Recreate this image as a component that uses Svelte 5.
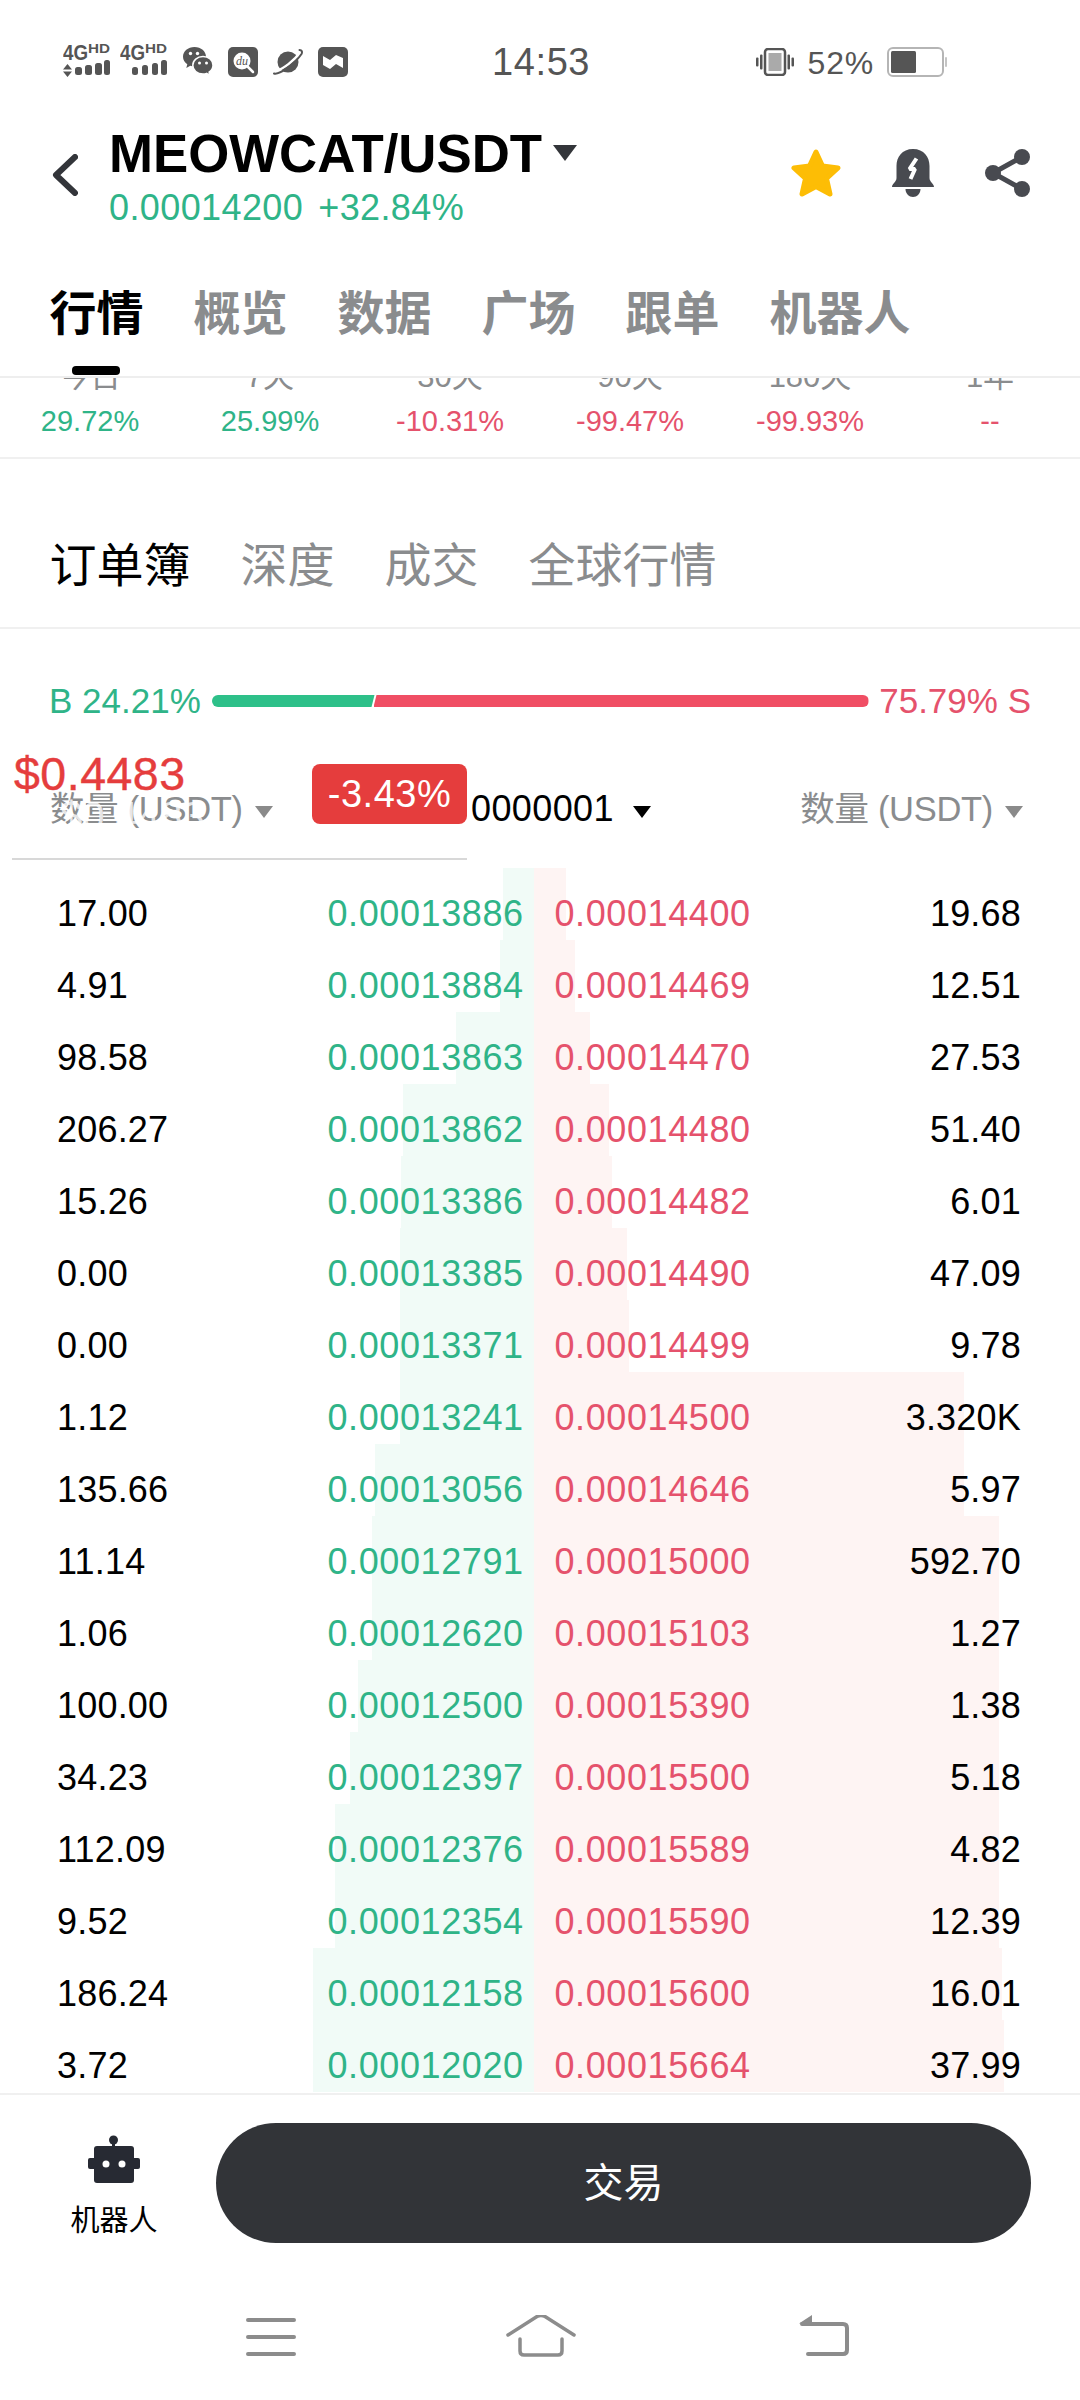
<script>
  const periods = [
    ['今日', '29.72%', 'up'], ['7天', '25.99%', 'up'], ['30天', '-10.31%', 'down'],
    ['90天', '-99.47%', 'down'], ['180天', '-99.93%', 'down'], ['1年', '--', 'down']
  ];
  const mainTabs = ['行情', '概览', '数据', '广场', '跟单', '机器人'];
  const bookTabs = ['订单簿', '深度', '成交', '全球行情'];
  const rows = [
    ['17.00', '0.00013886', '0.00014400', '19.68', 503, 566],
    ['4.91', '0.00013884', '0.00014469', '12.51', 500, 575],
    ['98.58', '0.00013863', '0.00014470', '27.53', 456, 590],
    ['206.27', '0.00013862', '0.00014480', '51.40', 403, 609],
    ['15.26', '0.00013386', '0.00014482', '6.01', 401, 612],
    ['0.00', '0.00013385', '0.00014490', '47.09', 400, 627],
    ['0.00', '0.00013371', '0.00014499', '9.78', 400, 629],
    ['1.12', '0.00013241', '0.00014500', '3.320K', 400, 964],
    ['135.66', '0.00013056', '0.00014646', '5.97', 375, 964],
    ['11.14', '0.00012791', '0.00015000', '592.70', 372, 999],
    ['1.06', '0.00012620', '0.00015103', '1.27', 372, 999],
    ['100.00', '0.00012500', '0.00015390', '1.38', 358, 999],
    ['34.23', '0.00012397', '0.00015500', '5.18', 350, 999],
    ['112.09', '0.00012376', '0.00015589', '4.82', 335, 999],
    ['9.52', '0.00012354', '0.00015590', '12.39', 335, 999],
    ['186.24', '0.00012158', '0.00015600', '16.01', 313, 1002],
    ['3.72', '0.00012020', '0.00015664', '37.99', 313, 1004]
  ];
  const MID = 534;
</script>

<div class="page">
  <div class="status">
    <div class="status-left">
      <svg class="net" width="47" height="34" viewBox="0 0 47 34">
        <text x="0" y="16" class="g4" textLength="25" lengthAdjust="spacingAndGlyphs">4G</text>
        <text x="25" y="9" class="hd" textLength="22" lengthAdjust="spacingAndGlyphs">HD</text>
        <path d="M4.500 20l4.500 5.500H0zM4.500 33L0 27.500h9z" fill="#555" />
        <rect x="12" y="23" width="7" height="8" rx="2.500" fill="#555" />
        <rect x="22" y="21" width="7" height="10" rx="2.500" fill="#555" />
        <rect x="32" y="19" width="7" height="12" rx="2.500" fill="#555" />
        <rect x="41" y="16" width="6" height="15" rx="2.500" fill="#555" />
      </svg>
      <svg class="net" width="47" height="34" viewBox="0 0 47 34">
        <text x="0" y="16" class="g4" textLength="25" lengthAdjust="spacingAndGlyphs">4G</text>
        <text x="25" y="9" class="hd" textLength="22" lengthAdjust="spacingAndGlyphs">HD</text>
        <rect x="12" y="23" width="6" height="8" rx="2.500" fill="#555" />
        <rect x="22" y="21" width="6" height="10" rx="2.500" fill="#555" />
        <rect x="32" y="19" width="6" height="12" rx="2.500" fill="#555" />
        <rect x="41" y="16" width="6" height="15" rx="2.500" fill="#555" />
      </svg>
      <svg class="ic" width="30" height="30" viewBox="0 0 30 30">
        <path d="M11.500 0C5 0 0 4.300 0 9.700c0 3.100 1.700 5.800 4.300 7.600L3.300 21l4-2.200c1.200.4 2.600.6 4.200.6 6.500 0 11.500-4.300 11.500-9.700S18 0 11.500 0z" fill="#555" />
        <path d="M20 9.500c-5.800 0-10.200 3.900-10.200 8.800s4.400 8.700 10.200 8.700c1.300 0 2.500-.2 3.600-.6l3.400 2-.9-3.300c2.400-1.600 3.900-4 3.900-6.800 0-4.900-4.400-8.800-10-8.800z" fill="#555" stroke="#fff" stroke-width="1.500" />
        <circle cx="7.500" cy="6.500" r="1.700" fill="#fff" /><circle cx="14.500" cy="6.500" r="1.700" fill="#fff" />
        <circle cx="16.500" cy="16" r="1.500" fill="#fff" /><circle cx="23.500" cy="16" r="1.500" fill="#fff" />
      </svg>
      <svg class="ic" width="30" height="30" viewBox="0 0 30 30">
        <rect width="30" height="30" rx="5" fill="#555" />
        <circle cx="14" cy="14" r="8.500" fill="#fff" />
        <path d="M20 20l5 5" stroke="#fff" stroke-width="2.500" stroke-linecap="round" />
        <text x="14" y="17.500" class="du">du</text>
      </svg>
      <svg class="ic" width="30" height="30" viewBox="0 0 30 30">
        <circle cx="15" cy="15" r="10.500" fill="#555" />
        <path d="M3 24C10 22 21 14 27.500 5" stroke="#fff" stroke-width="2.500" fill="none" />
        <path d="M1 26.500C6 28 21 18 28.500 7c1-2 .5-4-2-4" stroke="#555" stroke-width="2" fill="none" stroke-linecap="round" />
      </svg>
      <svg class="ic" width="30" height="30" viewBox="0 0 30 30">
        <rect width="30" height="30" rx="5" fill="#555" />
        <path d="M5 9l7 4 6-5 7 3v10l-7-4-6 5-7-4z" fill="#fff" />
      </svg>
    </div>
    <div class="time">14:53</div>
    <div class="status-right">
      <svg width="38" height="28" viewBox="0 0 38 28">
        <rect x="9" y="1" width="20" height="26" rx="3" fill="none" stroke="#555" stroke-width="2.500" />
        <rect x="12.500" y="5" width="13" height="18" fill="#aaa" />
        <rect x="0" y="9.500" width="2.500" height="9" rx="1" fill="#555" />
        <rect x="4" y="6.500" width="2.500" height="15" rx="1" fill="#555" />
        <rect x="31.500" y="6.500" width="2.500" height="15" rx="1" fill="#555" />
        <rect x="35.500" y="9.500" width="2.500" height="9" rx="1" fill="#555" />
      </svg>
      <span class="pct">52%</span>
      <svg width="60" height="30" viewBox="0 0 60 30">
        <rect x="1" y="1" width="55" height="28" rx="5" fill="#fff" stroke="#b5b5b5" stroke-width="2" />
        <rect x="4" y="4" width="25" height="22" rx="1.500" fill="#555" />
        <rect x="58" y="10" width="2" height="10" rx="1" fill="#c4c4c4" />
      </svg>
    </div>
  </div>

  <div class="head">
    <svg class="back" width="26" height="42" viewBox="0 0 26 42">
      <path d="M23 3L4 21l19 18" fill="none" stroke="#33353a" stroke-width="6" stroke-linecap="round" stroke-linejoin="round" />
    </svg>
    <div class="pair">
      <div class="title-row"><span class="title">MEOWCAT/USDT</span><i class="tri title-tri"></i></div>
      <div class="quote"><span>0.00014200</span><span>+32.84%</span></div>
    </div>
    <div class="actions">
      <svg width="50" height="48" viewBox="0 0 50 48">
        <path d="M25 3l6.500 14 15.500 2-11.500 10.500L39 45l-14-7.500L11 45l3.500-15.500L3 19l15.500-2z" fill="#fdbd05" stroke="#fdbd05" stroke-width="5" stroke-linejoin="round" />
      </svg>
      <svg width="42" height="48" viewBox="0 0 42 48">
        <path d="M21 0C10 0 4.500 8 4.500 17v12C4.500 33 0 34.500 0 38h42c0-3.500-4.500-5-4.500-9V17C37.500 8 32 0 21 0z" fill="#484a50" />
        <path d="M13.500 40h15c0 4.500-3.500 8-7.500 8s-7.500-3.500-7.500-8z" fill="#484a50" />
        <path d="M24.500 9.500l-7 10.500h5.500l-4.500 10" fill="none" stroke="#fff" stroke-width="4" stroke-linejoin="bevel" />
      </svg>
      <svg width="46" height="48" viewBox="0 0 46 48">
        <path d="M37 8L8 24l29 16" fill="none" stroke="#484a50" stroke-width="5" />
        <circle cx="37" cy="8" r="8" fill="#484a50" /><circle cx="8" cy="24" r="8" fill="#484a50" /><circle cx="37" cy="40" r="8" fill="#484a50" />
      </svg>
    </div>
  </div>

  <div class="main-tabs">
    {#each mainTabs as t, i}<span class:on={i === 0}>{t}</span>{/each}
    <i class="indicator"></i>
  </div>

  <div class="periods">
    <div class="period-grid">
      {#each periods as p}
        <div class="period"><span class="plabel">{p[0]}</span><span class={p[2]}>{p[1]}</span></div>
      {/each}
    </div>
  </div>

  <div class="book-tabs">
    {#each bookTabs as t, i}<span class:on={i === 0}>{t}</span>{/each}
  </div>

  <div class="ratio">
    <span class="up">B 24.21%</span>
    <div class="bar"><i class="bar-buy"></i><i class="bar-sell"></i></div>
    <span class="down">75.79% S</span>
  </div>

  <div class="cols">
    <span class="col col-l">数量 (USDT)<i class="tri"></i></span>
    <span class="col col-m">0000001<i class="tri dark"></i></span>
    <span class="col col-r">数量 (USDT)<i class="tri"></i></span>
  </div>

  <div class="book">
    {#each rows as r}
      <div class="row">
        <i class="depth buy" style="left:{r[4]}px;width:{MID - r[4]}px"></i>
        <i class="depth sell" style="left:{MID}px;width:{r[5] - MID}px"></i>
        <span class="v">{r[0]}</span>
        <span class="p up r">{r[1]}</span>
        <span class="p down">{r[2]}</span>
        <span class="v r">{r[3]}</span>
      </div>
    {/each}
  </div>

  <div class="footer">
    <div class="robot">
      <svg width="52" height="48" viewBox="0 0 52 48">
        <circle cx="25.500" cy="5" r="4.500" fill="#272a33" />
        <rect x="24" y="6" width="3" height="8" fill="#272a33" />
        <rect x="6" y="11" width="40" height="37" rx="3" fill="#272a33" />
        <rect x="0" y="23" width="52" height="11" rx="2" fill="#272a33" />
        <circle cx="18" cy="29" r="3.500" fill="#fff" /><circle cx="34" cy="29" r="3.500" fill="#fff" />
      </svg>
      <span>机器人</span>
    </div>
    <div class="trade">交易</div>
  </div>

  <div class="nav">
    <svg width="50" height="42" viewBox="0 0 50 42">
      <path d="M2 5h46M2 22h46M2 39h46" stroke="#8c8c8c" stroke-width="4" stroke-linecap="round" />
    </svg>
    <svg width="70" height="42" viewBox="0 0 70 42">
      <path d="M2 20L31 1.500q4-2 8 0L68 20" fill="none" stroke="#8c8c8c" stroke-width="3.500" stroke-linecap="round" />
      <path d="M14 24v12q0 4 4 4h34q4 0 4-4V24" fill="none" stroke="#8c8c8c" stroke-width="3.500" stroke-linecap="round" />
    </svg>
    <svg width="51" height="42" viewBox="0 0 51 42">
      <path d="M13 0L0 8.500h13z" fill="#8c8c8c" />
      <path d="M3 9h41q4 0 4 4v22q0 4-4 4H9" fill="none" stroke="#8c8c8c" stroke-width="4" stroke-linecap="round" />
    </svg>
  </div>

  <div class="float-price">$0.4483</div>
  <div class="float-ghost">$0.4483</div>
  <div class="float-badge">-3.43%</div>
  <div class="float-line"></div>
</div>

<style>
  :global(body) { margin: 0; background: #fff; }
  .page {
    position: relative; width: 1080px; height: 2400px; overflow: hidden; background: #fff;
    display: flex; flex-direction: column;
    font-family: "Liberation Sans", "Noto Sans CJK SC", sans-serif; color: #000;
  }
  i { display: block; font-style: normal; }
  .up { color: #2fb488; }
  .down { color: #e5526c; }

  .status { height: 124px; display: flex; align-items: center; padding-left: 63px; padding-right: 133px; box-sizing: border-box; }
  .status-left { width: 429px; display: flex; align-items: center; }
  .net { margin-right: 10px; margin-top: -2px; }
  .ic { margin-right: 15px; }
  .net + .net { margin-right: 16px; }
  .g4 { font: bold 22px "Liberation Sans", sans-serif; fill: #555; }
  .hd { font: bold 13px "Liberation Sans", sans-serif; fill: #555; }
  .du { font: italic 12px "Liberation Serif", serif; fill: #555; text-anchor: middle; }
  .time { width: 97px; font-size: 38px; color: #555; letter-spacing: 0.600px; white-space: nowrap; margin-top: 1px; }
  .status-right { margin-left: auto; display: flex; align-items: center; }
  .pct { font-size: 32px; color: #555; margin: 2px 13px 0 14px; letter-spacing: 0.800px; }

  .head { height: 108px; display: flex; align-items: flex-start; position: relative; }
  .back { margin: 30px 0 0 52px; }
  .pair { margin-left: 31px; }
  .title-row { display: flex; height: 60px; align-items: center; }
  .title { font-size: 52.800px; font-weight: bold; line-height: 60px; color: #000; }
  .tri { width: 0; height: 0; border-left: 9px solid transparent; border-right: 9px solid transparent; border-top: 12px solid #8a8a8a; display: inline-block; margin-left: 12px; vertical-align: 3px; }
  .tri.dark { border-top-color: #000; margin-left: 19px; }
  .title-tri { border-left-width: 12px; border-right-width: 12px; border-top: 16px solid #33353a; margin: -2px 0 0 11px; }
  .quote { display: flex; gap: 15px; font-size: 36px; line-height: 48px; color: #2fb488; letter-spacing: 0.400px; }
  .actions { margin-left: auto; margin-right: 49px; margin-top: 25px; display: flex; width: 240px; justify-content: space-between; }

  .main-tabs { position: relative; box-sizing: border-box; height: 146px; padding: 51px 0 0 49.500px; display: flex; gap: 50px; border-bottom: 2px solid #eeeeee; font-size: 47px; line-height: 62px; font-weight: bold; color: #8a8c8e; }
  .main-tabs .on { color: #000; }
  .indicator { position: absolute; left: 72px; top: 134px; width: 48px; height: 9px; border-radius: 4px; background: #000; }

  .periods { height: 79px; overflow: hidden; border-bottom: 2px solid #f0f0f0; }
  .period-grid { display: grid; grid-template-columns: repeat(6, 180px); margin-top: -21px; }
  .period { display: flex; flex-direction: column; align-items: center; gap: 4px; font-size: 29px; line-height: 40px; }
  .plabel { font-size: 31px; color: #8a8c8e; }

  .book-tabs { box-sizing: border-box; height: 170px; padding: 76px 0 0 49.500px; display: flex; gap: 50px; border-bottom: 2px solid #f0f0f0; font-size: 47px; line-height: 62px; color: #8a8c8e; }
  .book-tabs .on { color: #000; }

  .ratio { margin-top: 52px; height: 40px; display: flex; align-items: center; justify-content: space-between; padding: 0 49px; font-size: 35px; line-height: 40px; }
  .bar { width: 657px; height: 12px; display: flex; }
  .bar-buy { width: 163px; background: #2ec089; border-radius: 6px 0 0 6px; clip-path: polygon(0 0, 100% 0, calc(100% - 3px) 100%, 0 100%); }
  .bar-sell { flex: 1; margin-left: -1px; background: #f04e64; border-radius: 0 6px 6px 0; clip-path: polygon(3px 0, 100% 0, 100% 100%, 0 100%); }

  .cols { height: 147px; position: relative; font-size: 34.500px; line-height: 44px; color: #8a8c8e; display: flex; padding: 66px 57px 0 50px; box-sizing: border-box; }
  .col { white-space: nowrap; height: 44px; letter-spacing: -0.300px; }
  .col-l { width: 221px; }
  .col-m { color: #000; margin-left: 200px; font-size: 36px; letter-spacing: 0.400px; }
  .col-r { margin-left: auto; }

  .book { display: flex; flex-direction: column; margin-bottom: 1px; }
  .row { position: relative; box-sizing: border-box; height: 72px; padding: 26px 59px 0 57px; display: flex; font-size: 36px; line-height: 40px; }
  .row span { position: relative; }
  .depth { position: absolute; top: 0; bottom: 0; }
  .buy { background: #f1fbf7; }
  .sell { background: #fef4f3; }
  .v { flex: 1 1 0; letter-spacing: 0.200px; }
  .p { width: 196px; letter-spacing: 0.600px; white-space: nowrap; }
  .p.up { margin-right: 31px; }
  .r { text-align: right; }

  .footer { box-sizing: border-box; height: 206px; border-top: 2px solid #f0f0f0; display: flex; align-items: flex-start; padding-top: 28px; }
  .robot { width: 228px; display: flex; flex-direction: column; align-items: center; padding-top: 12px; font-size: 29px; line-height: 36px; }
  .robot span { margin-top: 20px; }
  .trade { width: 815px; margin-left: -12px; height: 120px; border-radius: 60px; background: #323438; color: #fff; font-size: 40px; line-height: 120px; text-align: center; }

  .nav { padding: 16px 0 0 246px; display: flex; gap: 210px; }
  .nav svg + svg + svg { margin-left: 13px; }

  .float-price { position: absolute; left: 14px; top: 748px; font-size: 46.500px; line-height: 52px; color: #e53d3d; letter-spacing: 0.500px; -webkit-text-stroke: 0.400px #e53d3d; }
  .float-ghost { position: absolute; left: 60px; top: 794px; font-size: 40px; line-height: 44px; color: rgba(255, 255, 255, 0.800); }
  .float-badge { position: absolute; left: 312px; top: 764px; width: 155px; height: 60px; border-radius: 8px; background: #e53d3d; color: #fff; font-size: 38px; line-height: 60px; text-align: center; letter-spacing: 0.500px; }
  .float-line { position: absolute; left: 12px; top: 858px; width: 455px; height: 2px; background: #d8d8d8; }
</style>
